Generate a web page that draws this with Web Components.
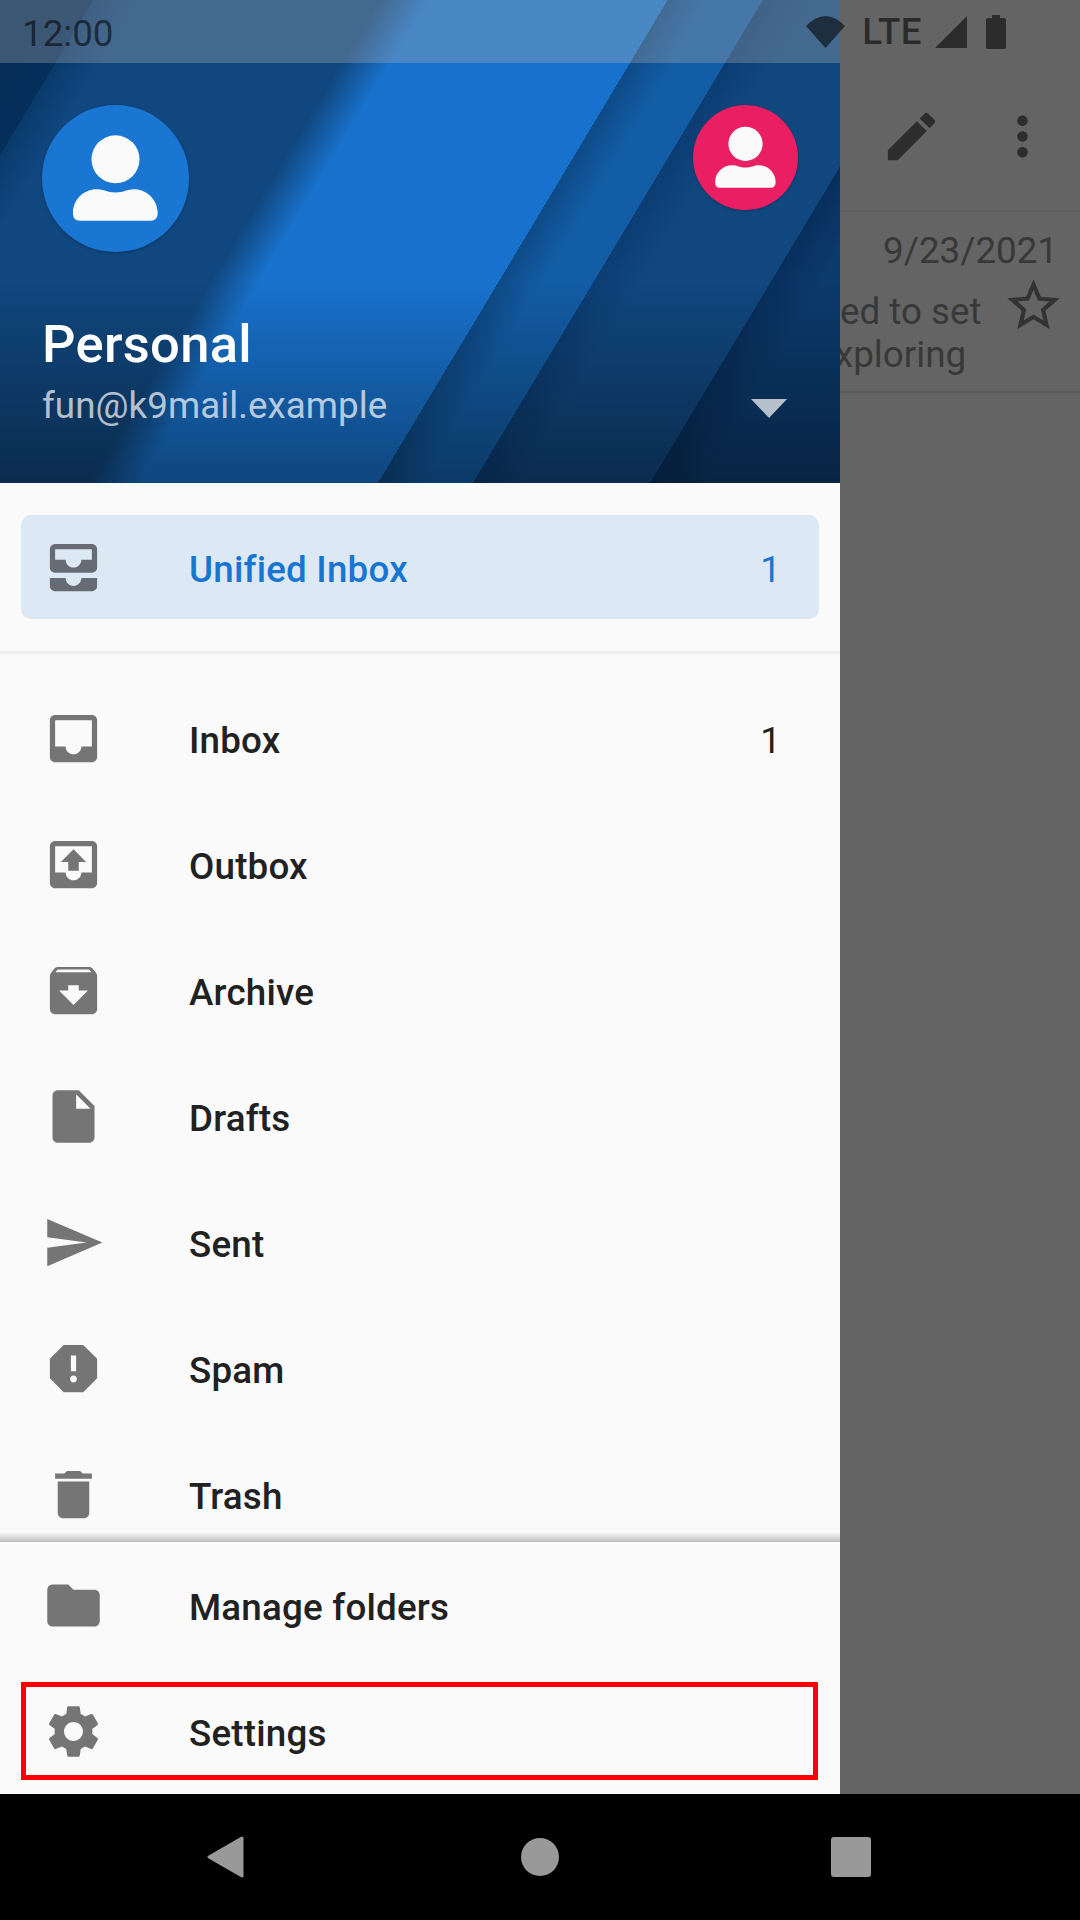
<!DOCTYPE html>
<html>
<head>
<meta charset="utf-8">
<title>K-9 Mail drawer</title>
<style>
  html, body { margin: 0; padding: 0; background: #000; }
  body { font-family: Roboto, "Liberation Sans", sans-serif; width: 1080px; height: 1920px; overflow: hidden; }
</style>
</head>
<body>

<template id="status-bar">
  <style>
    :host { position: absolute; top: 0; left: 0; right: 0; height: 63px; display: flex; align-items: center;
      justify-content: space-between; padding: 0 74px 0 22px; box-sizing: border-box;
      font-size: 36.75px; color: rgba(0, 0, 0, 0.56); }
    .right { display: flex; align-items: center; }
    .lte { font-weight: 500; margin: 0 13px 0 17px; line-height: 63px; letter-spacing: 0.4px; }
    .time { line-height: 63px; padding-top: 3px; }
    svg { display: block; fill: currentColor; }
    .bat { margin-left: 19px; }
  </style>
  <span class="time">12:00</span>
  <div class="right">
    <svg width="39" height="32" viewBox="0 0 39 32"><path d="M0 10Q19.5-10 39 10L19.5 32Z"/></svg>
    <span class="lte">LTE</span>
    <svg width="32" height="32" viewBox="0 0 32 32"><path d="M0 32L32 0V32Z"/></svg>
    <svg class="bat" width="20" height="34" viewBox="0 0 20 34"><path d="M6 0h8v3h4c1.1 0 2 .9 2 2v27c0 1.1-.9 2-2 2H2c-1.1 0-2-.9-2-2V5c0-1.1.9-2 2-2h4z"/></svg>
  </div>
</template>

<template id="account-avatar">
  <style>
    :host { display: block; width: var(--size, 147px); height: var(--size, 147px); border-radius: 50%;
      background: var(--bg, #1976d2); box-shadow: 0 1px 3px rgba(0, 0, 0, 0.25); }
    svg { display: block; width: 100%; height: 100%; fill: #fafafa; }
  </style>
  <svg viewBox="0 0 147 147">
    <circle cx="73.5" cy="54.3" r="24"/>
    <path d="M31 108C31 95 41 84.3 55 84.3C62 84.3 65 87.5 73.4 87.5C82 87.5 85 84.3 92 84.3C105 84.3 115.7 95 115.7 108C115.7 113 113 115.7 109 115.7L38 115.7C33 115.7 31 113 31 108Z"/>
  </svg>
</template>

<template id="drawer-header">
  <style>
    :host { display: block; height: 483px; box-sizing: border-box; color: #fff; position: relative;
      background:
        linear-gradient(to bottom, rgba(0, 0, 0, 0) 280px, rgba(0, 0, 0, 0.39) 100%),
        linear-gradient(120.96deg,
          #052c56 0, #052e5a 80px, #0a3a6c 80px, #10477f 118px,
          #10477f 325px, #1872cd 368px,
          #1872cd 572.5px, #0e4a86 572.5px, #125da6 610px,
          #125da6 654px, #0c3d73 654px, #10477f 695px,
          #10477f 806px, #082f5c 806px, #0b3a6c 850px, #0b3a6c 968px);
    }
    .tint { height: 63px; background: rgba(177, 177, 177, 0.32); }
    .avatars { display: flex; justify-content: space-between; padding: 42px 42px 0; }
    .small { --size: 105px; --bg: #e91e63; }
    .name { font-size: 52.5px; font-weight: 500; line-height: 62px; margin: 60.5px 42px 0; letter-spacing: 0.3px; }
    .mail { display: flex; justify-content: space-between; align-items: center; margin: 6.5px 53px 0 42px;
      font-size: 36.75px; line-height: 50px; color: rgba(255, 255, 255, 0.7); letter-spacing: 0.05px; }
    .arrow { width: 0; height: 0; border-left: 18px solid transparent; border-right: 18px solid transparent;
      border-top: 19px solid rgba(255, 255, 255, 0.7); margin-top: 4px; }
  </style>
  <div class="tint"></div>
  <div class="avatars">
    <account-avatar></account-avatar>
    <account-avatar class="small"></account-avatar>
  </div>
  <div class="name"><slot name="name"></slot></div>
  <div class="mail"><span><slot name="mail"></slot></span><i class="arrow"></i></div>
</template>

<template id="drawer-row">
  <style>
    :host { display: block; position: relative; }
    .row { display: flex; align-items: center; height: 126px; padding: 0 59px 0 42px; box-sizing: border-box;
      font-size: 36.75px; font-weight: 460; letter-spacing: 0.2px; color: #212121; position: relative; }
    svg { width: 63px; height: 63px; flex: none; fill: #757575; fill-rule: evenodd; margin-right: 84px; }
    .label { flex: 1; white-space: nowrap; padding-top: 4px; }
    .count { padding-top: 4px; font-weight: 400; }
    :host([selected]) { padding: 32px 0; }
    :host([selected]) .row { height: 104px; margin: 0 21px; padding: 0 38px 0 21px; color: #1976d2; border-radius: 10px; }
    :host([selected]) .row::before { content: ""; position: absolute; inset: 0; border-radius: 10px;
      background: rgba(25, 118, 210, 0.13); }
    :host([selected]) svg { fill: #736b67; }
    :host([marked]) .row::after { content: ""; position: absolute; top: 14px; bottom: 14px; left: 21px; right: 22px;
      border: 5px solid #f00; }
  </style>
  <div class="row">
    <svg viewBox="0 0 24 24"><path></path></svg>
    <span class="label"><slot></slot></span>
    <span class="count"></span>
  </div>
</template>

<template id="nav-drawer">
  <style>
    :host { display: flex; flex-direction: column; width: 840px; height: 1794px; flex: none; background: #fafafa; }
    .scroll { height: 1049px; overflow: hidden; }
    .rule { height: 3px; background: #eee; margin-bottom: 21px; }
    .shade { height: 10px; background: linear-gradient(to bottom, #fafafa, #bdbdbd); }
    .foot { height: 252px; }
  </style>
  <slot name="header"></slot>
  <div class="scroll">
    <slot name="top"></slot>
    <div class="rule"></div>
    <slot name="folders"></slot>
  </div>
  <div class="shade"></div>
  <div class="foot"><slot name="foot"></slot></div>
</template>

<template id="mail-behind">
  <style>
    :host { display: block; width: 240px; height: 1794px; flex: none; background: #646464; color: #383838;
      font-size: 36.75px; overflow: hidden; }
    .bar { margin-top: 63px; height: 147px; display: flex; align-items: center; padding-left: 40px; gap: 47.5px; }
    svg { width: 63px; height: 63px; fill: #2d2d2d; flex: none; display: block; }
    .item { height: 183px; box-sizing: border-box; border-top: 2px solid #5e5e5e; border-bottom: 2px solid #5a5a5a; padding-right: 22px; }
    .date { text-align: right; line-height: 40px; margin-top: 19px; }
    .body { display: flex; margin-top: 9px; }
    .text { flex: 1; line-height: 43px; white-space: nowrap; padding-top: 10px; }
    .star { margin: -6px -6.5px 0 0; fill: #333; }
    .x { margin-left: -5px; }
  </style>
  <div class="bar">
    <svg viewBox="0 0 24 24"><path d="M3 17.25V21h3.75L17.81 9.94l-3.75-3.75L3 17.25zM20.71 7.04c.39-.39.39-1.02 0-1.41l-2.34-2.34c-.39-.39-1.02-.39-1.41 0l-1.83 1.83 3.75 3.75 1.83-1.83z"/></svg>
    <svg viewBox="0 0 24 24"><path d="M12 8c1.1 0 2-.9 2-2s-.9-2-2-2-2 .9-2 2 .9 2 2 2zm0 2c-1.1 0-2 .9-2 2s.9 2 2 2 2-.9 2-2-.9-2-2-2zm0 6c-1.1 0-2 .9-2 2s.9 2 2 2 2-.9 2-2-.9-2-2-2z"/></svg>
  </div>
  <div class="item">
    <div class="date">9/23/2021</div>
    <div class="body">
      <div class="text"><div>ed to set</div><div class="x">xploring</div></div>
      <svg class="star" viewBox="0 0 24 24"><path d="M22 9.24l-7.19-.62L12 2 9.19 8.63 2 9.24l5.46 4.73L5.82 21 12 17.27 18.18 21l-1.63-7.03L22 9.24zM12 15.4l-3.76 2.27 1-4.28-3.32-2.88 4.38-.38L12 6.1l1.71 4.04 4.38.38-3.32 2.88 1 4.28L12 15.4z"/></svg>
    </div>
  </div>
</template>

<template id="nav-bar">
  <style>
    :host { display: flex; align-items: center; height: 126px; background: #000; padding-left: 207px; }
    svg { display: block; fill: #999; }
    .home { width: 38px; height: 38px; border-radius: 50%; background: #999; margin: 0 272px 0 277px; }
    .recent { width: 40px; height: 40px; border-radius: 3px; background: #999; }
  </style>
  <svg width="37" height="42" viewBox="0 0 37 42"><path d="M35 2L2 21L35 40Z" stroke="#999" stroke-width="3" stroke-linejoin="round"/></svg>
  <div class="home"></div>
  <div class="recent"></div>
</template>

<div id="app" style="position:relative;width:1080px;height:1920px;">
  <div style="display:flex;">
    <nav-drawer>
      <drawer-header slot="header">
        <span slot="name">Personal</span>
        <span slot="mail">fun@k9mail.example</span>
      </drawer-header>
      <drawer-row slot="top" icon="unified" count="1" selected>Unified Inbox</drawer-row>
      <drawer-row slot="folders" icon="inbox" count="1">Inbox</drawer-row>
      <drawer-row slot="folders" icon="outbox">Outbox</drawer-row>
      <drawer-row slot="folders" icon="archive">Archive</drawer-row>
      <drawer-row slot="folders" icon="drafts">Drafts</drawer-row>
      <drawer-row slot="folders" icon="sent">Sent</drawer-row>
      <drawer-row slot="folders" icon="spam">Spam</drawer-row>
      <drawer-row slot="folders" icon="trash">Trash</drawer-row>
      <drawer-row slot="foot" icon="folder">Manage folders</drawer-row>
      <drawer-row slot="foot" icon="settings" marked>Settings</drawer-row>
    </nav-drawer>
    <mail-behind></mail-behind>
  </div>
  <nav-bar></nav-bar>
  <status-bar></status-bar>
</div>

<script>
  const ICONS = {
    unified: "M5 3h14c1.1 0 2 .9 2 2v7c0 1.1-.9 2-2 2H5c-1.1 0-2-.9-2-2V5c0-1.1.9-2 2-2zM5 5v4h4c0 1.66 1.34 3 3 3s3-1.34 3-3h4V5zM3 16h6c0 1.66 1.34 3 3 3s3-1.34 3-3h6v3c0 1.1-.9 2-2 2H5c-1.1 0-2-.9-2-2z",
    inbox: "M19 3H5c-1.1 0-2 .9-2 2v14c0 1.1.9 2 2 2h14c1.1 0 2-.9 2-2V5c0-1.1-.9-2-2-2zm0 12h-4c0 1.66-1.35 3-3 3s-3-1.34-3-3H5V5h14v10z",
    outbox: "M19 3H5c-1.1 0-2 .9-2 2v14c0 1.1.9 2 2 2h14c1.1 0 2-.9 2-2V5c0-1.1-.9-2-2-2zm0 12h-4c0 1.66-1.35 3-3 3s-3-1.34-3-3H5V5h14v10zM7.2 11h2.8v3.4h4V11h2.8L12 6.2z",
    archive: "M20.54 5.23l-1.39-1.68C18.88 3.21 18.47 3 18 3H6c-.47 0-.88.21-1.16.55L3.46 5.23C3.17 5.57 3 6.02 3 6.5V19c0 1.1.9 2 2 2h14c1.1 0 2-.9 2-2V6.5c0-.48-.17-.93-.46-1.27zM12 17.5L6.5 12H10v-2h4v2h3.5L12 17.5zM5.12 5l.81-1h12l.94 1H5.12z",
    drafts: "M6 2c-1.1 0-1.99.9-1.99 2L4 20c0 1.1.89 2 1.99 2H18c1.1 0 2-.9 2-2V8l-6-6H6zm7 7V3.5L18.5 9H13z",
    sent: "M2.01 21L23 12 2.01 3 2 10l15 2-15 2z",
    spam: "M15.73 3H8.27L3 8.27v7.46L8.27 21h7.46L21 15.73V8.27L15.73 3zM12 17.3c-.72 0-1.3-.58-1.3-1.3 0-.72.58-1.3 1.3-1.3.72 0 1.3.58 1.3 1.3 0 .72-.58 1.3-1.3 1.3zm1-4.3h-2V7h2v6z",
    trash: "M6 19c0 1.1.9 2 2 2h8c1.1 0 2-.9 2-2V7H6v12zM19 4h-3.5l-1-1h-5l-1 1H5v2h14V4z",
    folder: "M10 4H4c-1.1 0-1.99.9-1.99 2L2 18c0 1.1.9 2 2 2h16c1.1 0 2-.9 2-2V8c0-1.1-.9-2-2-2h-8l-2-2z",
    settings: "M19.14 12.94c.04-.3.06-.61.06-.94 0-.32-.02-.64-.07-.94l2.03-1.58c.18-.14.23-.41.12-.61l-1.92-3.32c-.12-.22-.37-.29-.59-.22l-2.39.96c-.5-.38-1.03-.7-1.62-.94l-.36-2.54c-.04-.24-.24-.41-.48-.41h-3.84c-.24 0-.43.17-.47.41l-.36 2.54c-.59.24-1.13.57-1.62.94l-2.39-.96c-.22-.08-.47 0-.59.22L2.74 8.87c-.12.21-.08.47.12.61l2.03 1.58c-.05.3-.09.63-.09.94s.02.64.07.94l-2.03 1.58c-.18.14-.23.41-.12.61l1.92 3.32c.12.22.37.29.59.22l2.39-.96c.5.38 1.03.7 1.62.94l.36 2.54c.05.24.24.41.48.41h3.84c.24 0 .44-.17.47-.41l.36-2.54c.59-.24 1.13-.56 1.62-.94l2.39.96c.22.08.47 0 .59-.22l1.92-3.32c.12-.22.07-.47-.12-.61l-2.01-1.58zM12 15.6c-1.98 0-3.6-1.62-3.6-3.6s1.62-3.6 3.6-3.6 3.6 1.62 3.6 3.6-1.62 3.6-3.6 3.6z"
  };

  // plain elements: just clone their template into an open shadow root
  function simple(name) {
    customElements.define(name, class extends HTMLElement {
      constructor() {
        super();
        this.attachShadow({ mode: "open" }).appendChild(document.getElementById(name).content.cloneNode(true));
      }
    });
  }

  ["status-bar", "account-avatar", "drawer-header", "nav-drawer", "mail-behind", "nav-bar"].forEach(simple);

  customElements.define("drawer-row", class extends HTMLElement {
    constructor() {
      super();
      this._shadow = this.attachShadow({ mode: "open" });
      this._shadow.appendChild(document.getElementById("drawer-row").content.cloneNode(true));
    }

    connectedCallback() {
      this._shadow.querySelector("path").setAttribute("d", ICONS[this.getAttribute("icon")]);
      this._shadow.querySelector(".count").textContent = this.getAttribute("count") || "";
    }
  });
</script>
</body>
</html>
